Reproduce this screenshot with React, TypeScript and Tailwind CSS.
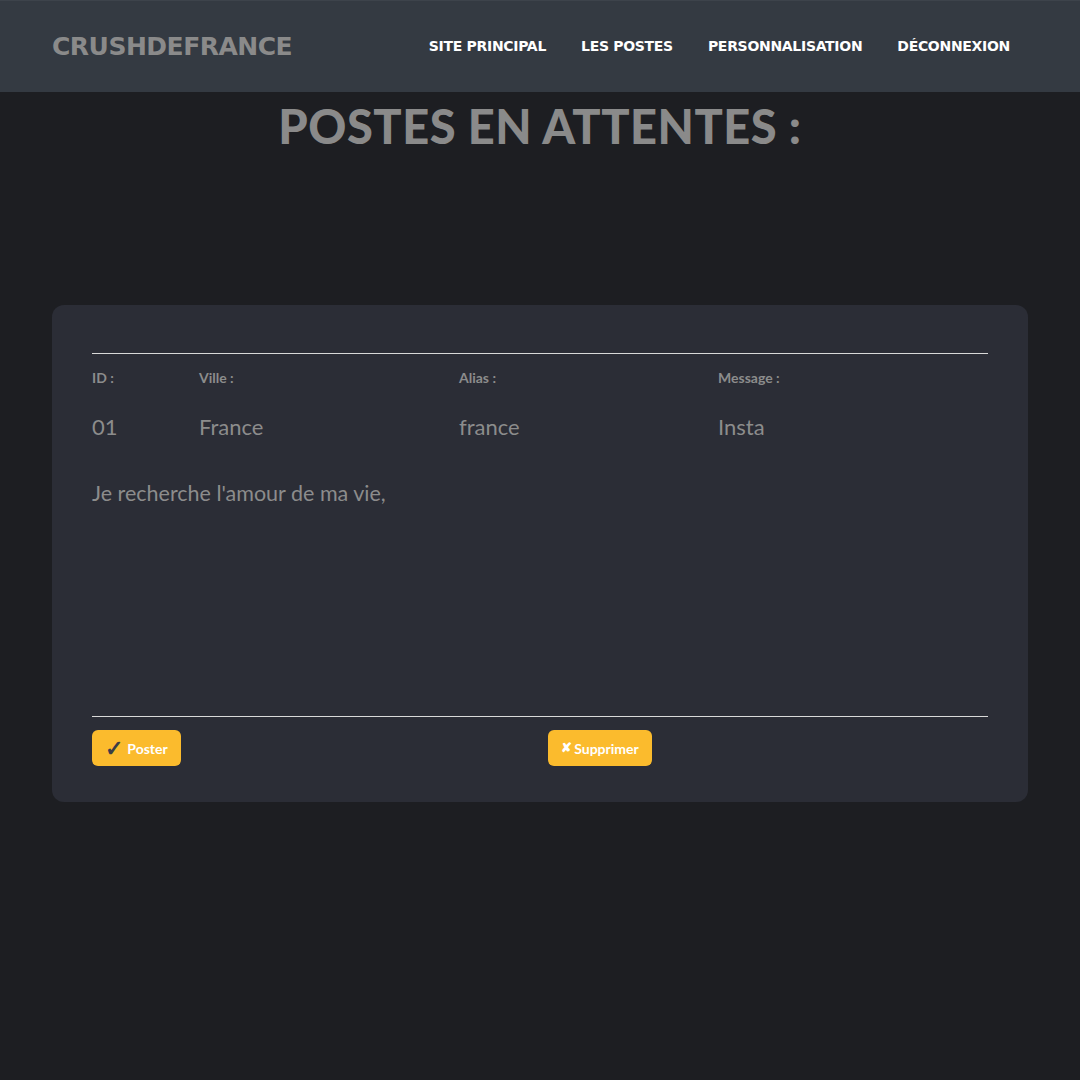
export default function App() {
  const fields = [
    { label: 'ID :', value: '01' },
    { label: 'Ville :', value: 'France' },
    { label: 'Alias :', value: 'france' },
    { label: 'Message :', value: 'Insta' },
  ];

  return (
    <div className="min-h-screen bg-[#1d1e22] font-['Lato','Liberation_Sans',sans-serif]">
      <nav className="h-[92px] bg-[#343a42] border-t border-[#3d434b] flex items-center justify-between pl-[52px] pr-[70px]">
        <span className="font-['DejaVu_Sans',sans-serif] font-bold text-[25px] tracking-[-0.5px] text-[#8a8a8a]">
          CRUSHDEFRANCE
        </span>
        <div className="flex items-center gap-[35px] font-['DejaVu_Sans',sans-serif] font-bold text-[14px] tracking-[-0.3px] text-white">
          <span>SITE PRINCIPAL</span>
          <span>LES POSTES</span>
          <span>PERSONNALISATION</span>
          <span>DÉCONNEXION</span>
        </div>
      </nav>

      <h1 className="mt-[4px] text-center font-['Lato',sans-serif] font-black text-[47px] leading-[60px] tracking-[0.5px] text-[#8a8a8a]">
        POSTES EN ATTENTES :
      </h1>

      <div className="mx-[52px] mt-[149px] bg-[#2b2d36] rounded-[12px] px-[40px] pt-[48px] pb-[36px]">
        <div className="border-t border-[#d9d9d9]" />
        <div className="grid grid-cols-[107px_260px_259px_1fr] pt-[14px]">
          {fields.map((f) => (
            <div key={f.label} className="flex flex-col">
              <span className="text-[14px] font-bold text-[#8c8c8c] leading-[20px]">{f.label}</span>
              <span className="mt-[25px] text-[22px] text-[#8c8c8c] leading-[28px]">{f.value}</span>
            </div>
          ))}
        </div>
        <p className="mt-[39px] text-[21.5px] text-[#8c8c8c] leading-[26px] h-[236px]">
          Je recherche l'amour de ma vie,
        </p>
        <div className="border-t border-[#d9d9d9]" />
        <div className="flex pt-[13px]">
          <div className="w-[456px]">
            <button className="h-[36px] w-[89px] rounded-[6px] bg-[#fbbb2d] text-white text-[14px] font-bold flex items-center justify-center gap-[4px]">
              <span className="text-[#3a3d46] text-[22px] leading-none">✓</span>
              <span>Poster</span>
            </button>
          </div>
          <button className="h-[36px] w-[104px] rounded-[6px] bg-[#fbbb2d] text-white text-[14px] font-bold flex items-center justify-center gap-[2px]">
            <span className="text-[13px]">✘</span>
            <span>Supprimer</span>
          </button>
        </div>
      </div>
    </div>
  );
}
